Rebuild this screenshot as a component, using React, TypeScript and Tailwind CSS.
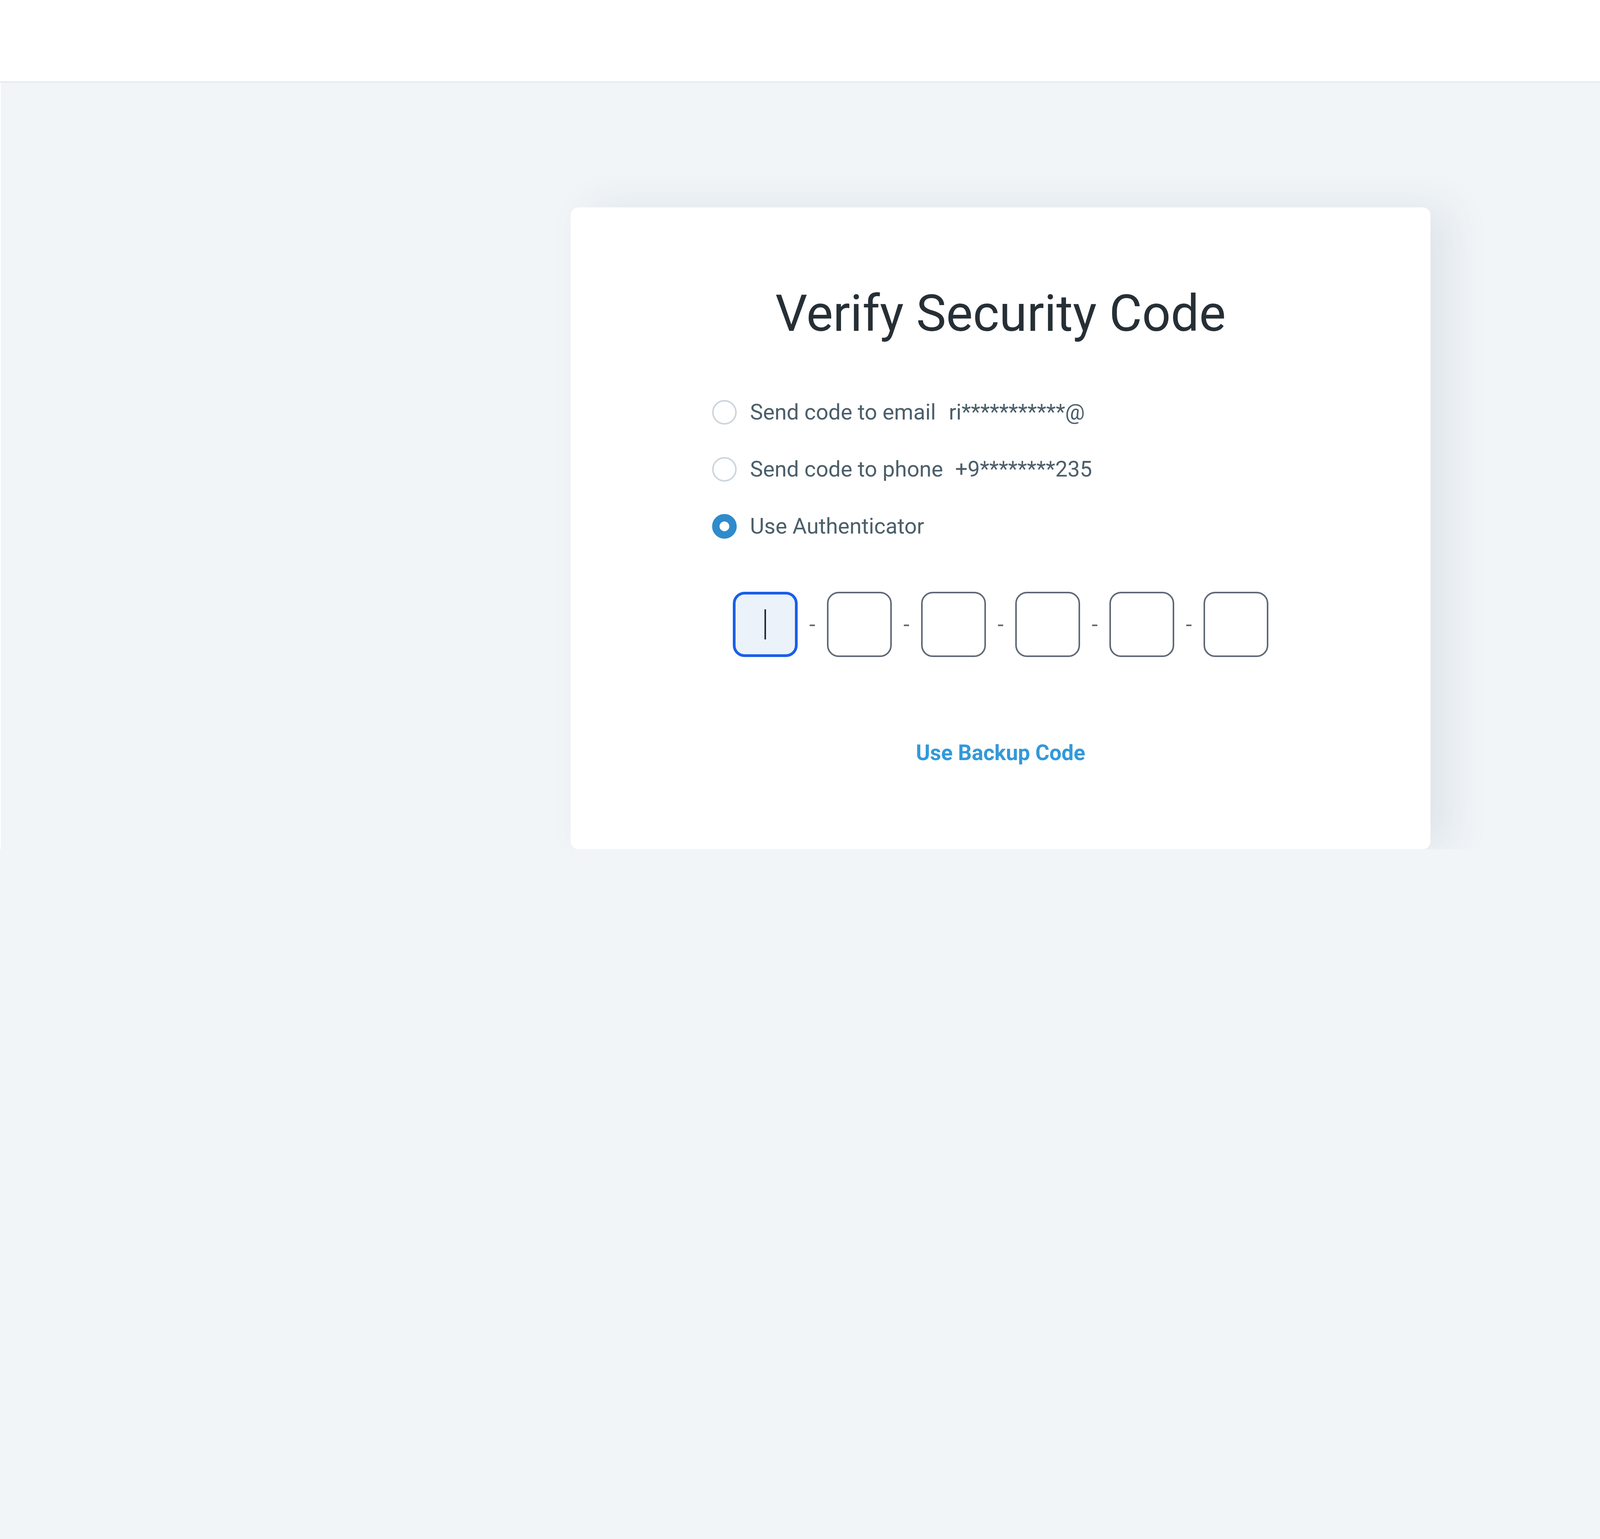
import { useState } from "react";

type Method = "email" | "phone" | "app";

// Radio rond, rempli en bleu quand il est sélectionné
function Radio({ checked }: { checked: boolean }) {
  return checked ? (
    <span className="block h-[63px] w-[63px] shrink-0 rounded-full border-[19px] border-[#2f8bcb] bg-white" />
  ) : (
    <span className="block h-[63px] w-[63px] shrink-0 rounded-full border-[4px] border-[#cdd5de] bg-white" />
  );
}

function Option({
  checked,
  label,
  value,
  clip,
  onSelect,
}: {
  checked: boolean;
  label: string;
  value?: string;
  clip?: boolean;
  onSelect: () => void;
}) {
  return (
    <button type="button" onClick={onSelect} className="flex h-[146px] items-center gap-[34px] text-left">
      <Radio checked={checked} />
      <span className="flex items-center whitespace-nowrap text-[56px] leading-none text-[#4c5f6a]">
        {label}
        {value && (
          <span
            className={
              clip
                ? "ml-[33px] inline-block max-w-[348px] overflow-hidden leading-[1.25]"
                : "ml-[31px] inline-block leading-[1.25]"
            }
          >
            {value}
          </span>
        )}
      </span>
    </button>
  );
}

export default function App() {
  const [method, setMethod] = useState<Method>("app");
  const cases = [0, 1, 2, 3, 4, 5];

  return (
    <div className="min-h-screen w-full bg-[#f1f5f8] font-[Roboto,'Liberation_Sans',sans-serif]">
      <header className="h-[212px] border-b-[4px] border-[#e6ebef] bg-white" />

      <main className="border-l-[2px] border-white pl-[1459px] pt-[319px]">
        {/* le conteneur coupe l'ombre au ras du bas de la carte */}
        <div className="-ml-[80px] -mt-[80px] w-fit overflow-hidden pl-[80px] pr-[260px] pt-[80px]">
          <div className="flex h-[1643px] w-[2201px] flex-col items-center rounded-[20px] bg-white pt-[207px] shadow-[50px_0_110px_rgba(40,70,100,0.09)]">
            <h1 className="text-[129px] font-normal leading-none text-[#262f35]">Verify Security Code</h1>

            <div className="mt-[115px] flex flex-col self-start pl-[362px]">
              <Option
                checked={method === "email"}
                label="Send code to email"
                value="ri***********@gmail.com"
                clip
                onSelect={() => setMethod("email")}
              />
              <Option
                checked={method === "phone"}
                label="Send code to phone"
                value="+9********235"
                onSelect={() => setMethod("phone")}
              />
              <Option checked={method === "app"} label="Use Authenticator" onSelect={() => setMethod("app")} />
            </div>

            <div className="mt-[95px] flex items-center">
              {cases.map((i) => (
                <div key={i} className="flex items-center">
                  {i > 0 && (
                    <span className="flex w-[75px] justify-center text-[56px] leading-none text-[#5e6c77]">-</span>
                  )}
                  {i === 0 ? (
                    <div className="flex h-[167px] w-[166px] items-center justify-center rounded-[30px] border-[7px] border-[#1a5ee9] bg-[#ebf2f9]">
                      <span className="block h-[77px] w-[4px] bg-[#222a30]" />
                    </div>
                  ) : (
                    <div className="h-[167px] w-[166px] rounded-[30px] border-[4px] border-[#5f6877] bg-white" />
                  )}
                </div>
              ))}
            </div>

            <a href="#" className="mt-[218px] text-[55px] font-bold leading-none text-[#3399d9]">
              Use Backup Code
            </a>
          </div>
        </div>
      </main>
    </div>
  );
}
